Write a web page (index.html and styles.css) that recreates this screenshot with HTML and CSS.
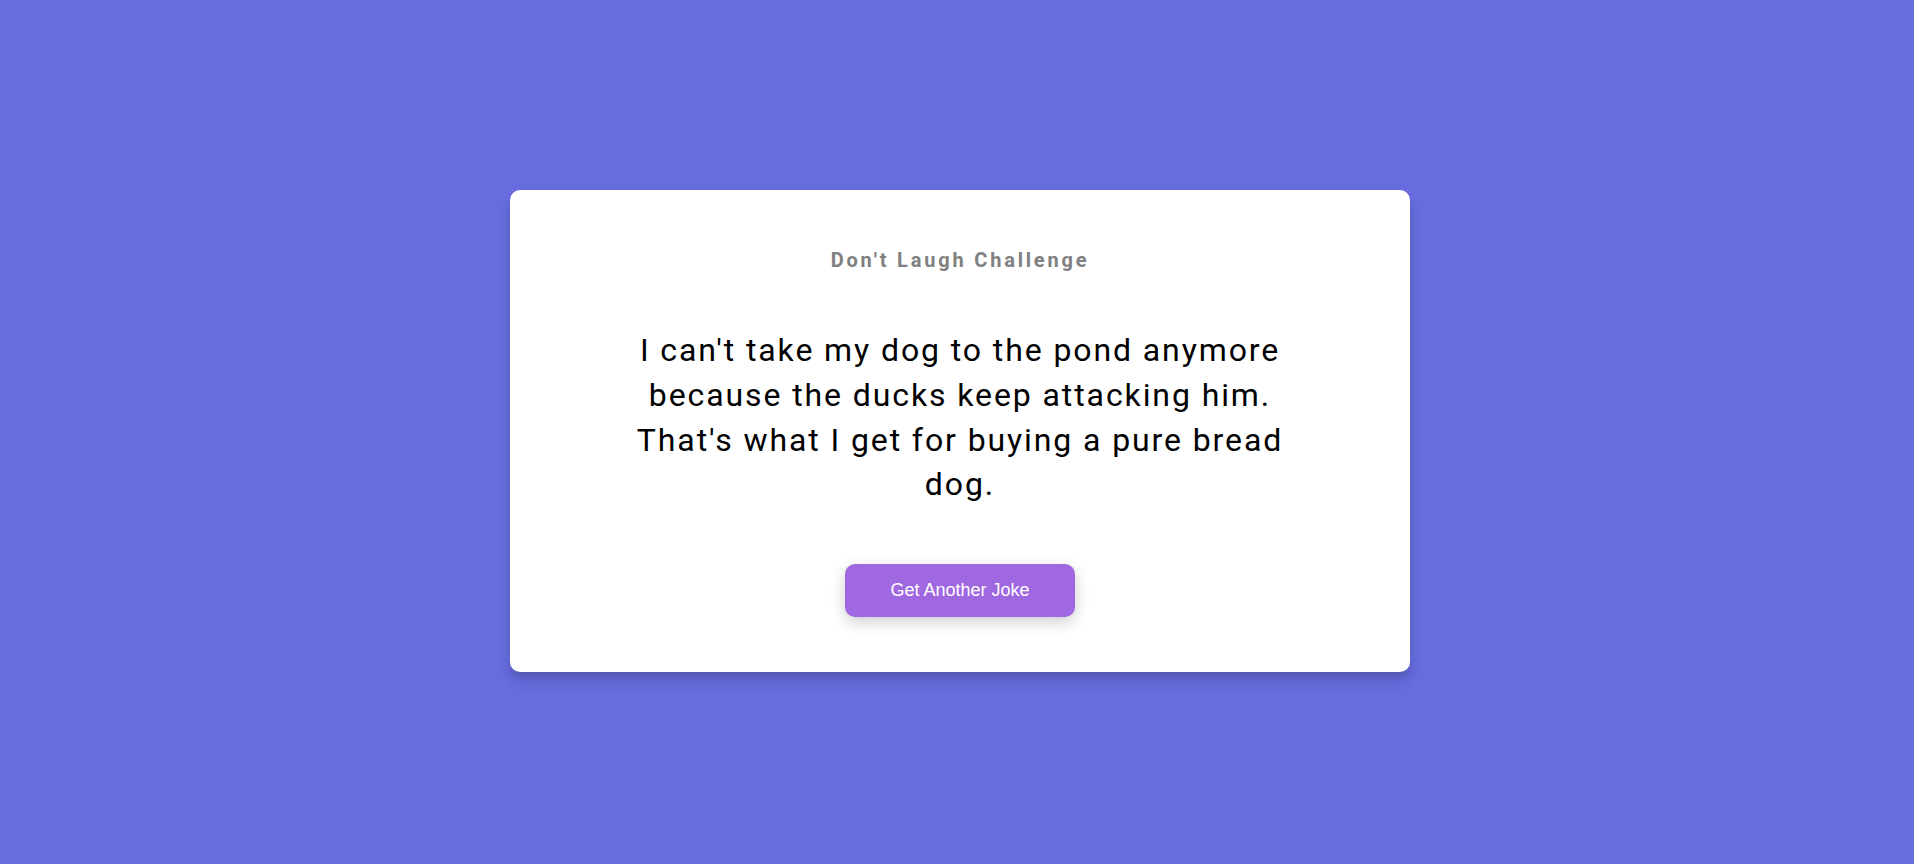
FILE: index.html
```html
<!DOCTYPE html>
<html lang="en">
<head>
<meta charset="UTF-8">
<title>Don't Laugh Challenge</title>
<link rel="stylesheet" href="styles.css">
</head>
<body>
<main class="page">
  <section class="card">
    <h3 class="title">Don't Laugh Challenge</h3>
    <p class="joke">I can't take my dog to the pond anymore because the ducks keep attacking him. That's what I get for buying a pure bread dog.</p>
    <button class="btn" type="button">Get Another Joke</button>
  </section>
</main>
</body>
</html>
```
FILE: styles.css
```css
* { box-sizing: border-box; }
html, body { margin: 0; padding: 0; }
body {
  background: #686de0;
  font-family: Roboto, "Liberation Sans", sans-serif;
  height: 864px;
  overflow: hidden;
}
.page {
  height: 100vh;
  display: flex;
  align-items: center;
  justify-content: center;
  padding: 0 0 2px 6px;
}
.card {
  width: 900px;
  background: #fff;
  border-radius: 10px;
  box-shadow: 0 10px 20px rgba(0, 0, 0, 0.1), 0 6px 6px rgba(0, 0, 0, 0.1);
  padding: 58px 50px 55px;
  display: flex;
  flex-direction: column;
  align-items: center;
  text-align: center;
}
.title {
  margin: 0 0 56px;
  font-size: 20px;
  font-weight: 700;
  line-height: normal;
  letter-spacing: 2.8px;
  color: #808080;
}
.joke {
  margin: 0 0 57px;
  max-width: 700px;
  font-size: 32px;
  line-height: 1.4;
  letter-spacing: 1.9px;
  color: #000;
}
.btn {
  font-family: "Liberation Sans", Arial, sans-serif;
  font-size: 18px;
  line-height: 19px;
  color: #fff;
  background: #9f68e0;
  border: none;
  border-radius: 10px;
  padding: 17px 45px;
  box-shadow: 0 5px 15px rgba(0, 0, 0, 0.2);
  cursor: pointer;
}
```
